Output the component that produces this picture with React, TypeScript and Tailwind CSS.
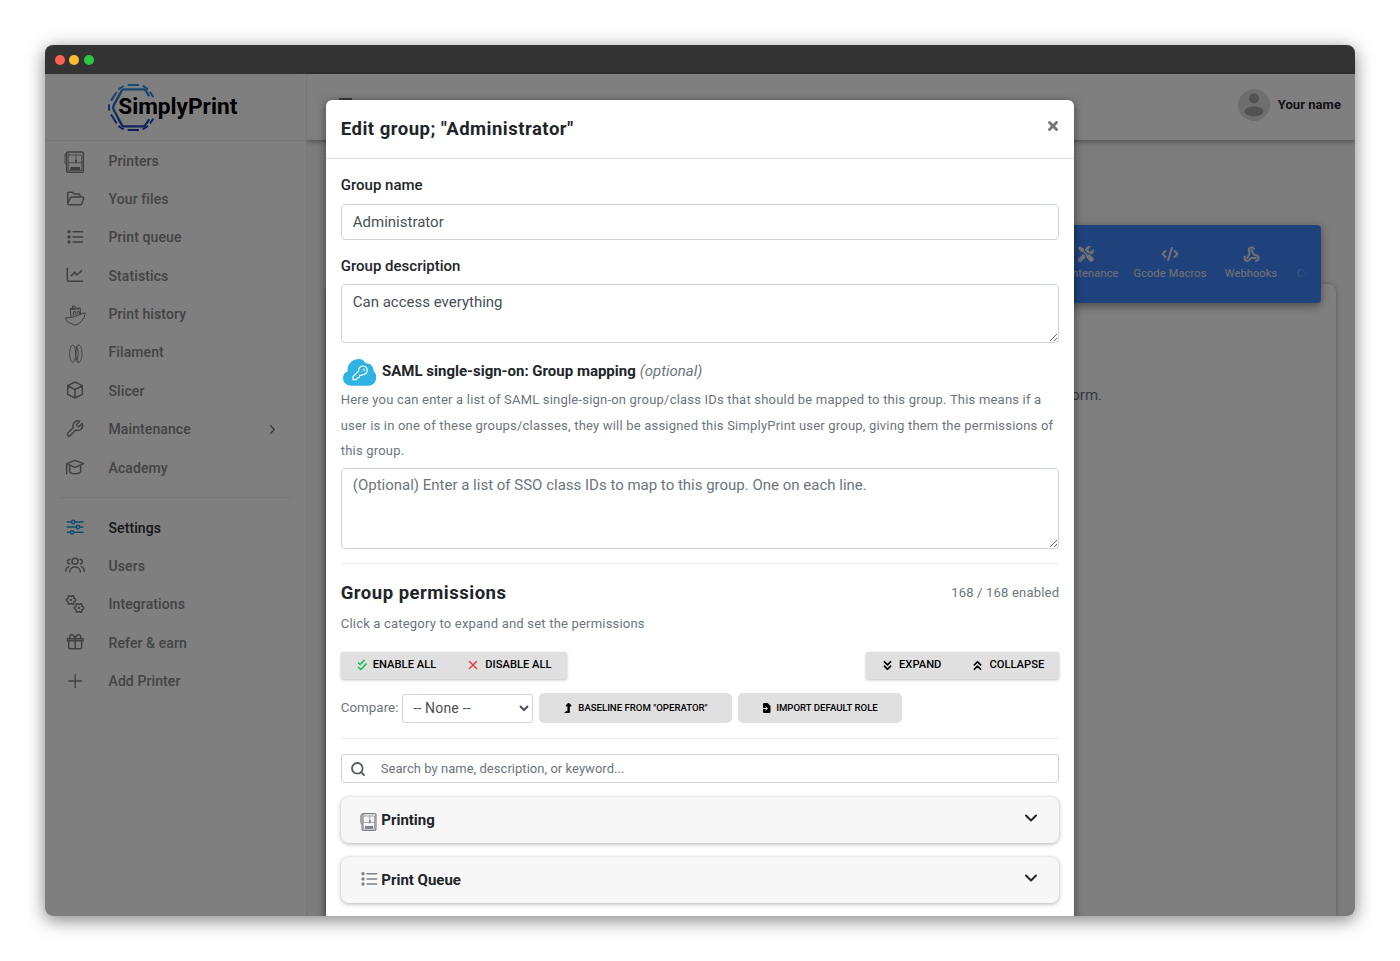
import { ReactNode } from 'react';
import { ChevronDown, ChevronRight, ChevronsDown, ChevronsUp, CodeXml, Search, Webhook, X } from 'lucide-react';
import { FaLevelUpAlt, FaTools } from 'react-icons/fa';

// Scalloped outline used for the two integration cogs
const cogPath = (cx: number, cy: number): string => {
    const points = Array.from({ length: 48 }, (_, i) => {
        const a = (i / 48) * Math.PI * 2;
        const r = 12.5 + 2 * Math.cos(a * 6);
        return `${(cx + r * Math.cos(a)).toFixed(1)},${(cy + r * Math.sin(a)).toFixed(1)}`;
    });
    return `M${points.join('L')}Z`;
};

const PrinterShape = () => (
    <>
        <rect x="11" y="9" width="50" height="61" rx="4" />
        <path d="M11 12Q6 13 6 18V42Q6 46 11 47" strokeWidth="3" />
        <path d="M17 18H56V64H17ZM17 41H34M45 41H56M15 10L19 18M39 18V34" strokeWidth="2.5" />
        <path d="M36 32H42V41L39 46L36 41Z" fill="currentColor" stroke="none" />
        <rect x="22" y="54" width="29" height="10" fill="currentColor" stroke="none" />
    </>
);

const ListShape = () => (
    <>
        <path d="M30 17H59M30 33H59M30 48H59" />
        <g fill="currentColor" stroke="none">
            <circle cx="18" cy="17" r="5" />
            <circle cx="18" cy="33" r="5" />
            <circle cx="18" cy="48" r="5" />
        </g>
    </>
);

const Glyph = ({ children, className = 'size-6' }: { children: ReactNode; className?: string }) => (
    <svg viewBox="0 0 72 72" className={className} fill="none" stroke="currentColor" strokeWidth="4.5" strokeLinecap="round" strokeLinejoin="round">
        {children}
    </svg>
);

const mainLinks = [
    { label: 'Printers', icon: <PrinterShape /> },
    {
        label: 'Your files',
        icon: <path d="M14 46V17Q14 13 18 13H28L34 18H47Q51 18 51 22V27M14 46L22 30Q24 27 27 27H58Q63 27 62 31L57 46Q56 50 52 50H18Q14 50 14 46Z" />,
    },
    { label: 'Print queue', icon: <ListShape /> },
    { label: 'Statistics', icon: <path d="M13 13V47Q13 52 18 52H59M25 35L35 25L42 33L56 20" /> },
    {
        label: 'Print history',
        icon: (
            <>
                <path d="M8 45Q22 45 34 41Q46 38 54 33Q60 30 67 30Q66 46 54 56Q46 64 39 66Q30 66 23 61Q9 57 8 45Z" strokeWidth="3" />
                <path d="M24 42L22 20L52 17L53 33M21 20V17L52 15M29 17L28 9H36V16M31 38V26H38V36M44 34V25H49V32" strokeWidth="3" />
            </>
        ),
    },
    {
        label: 'Filament',
        icon: (
            <g strokeWidth="2.8">
                <ellipse cx="29" cy="38" rx="9" ry="26" />
                <path d="M40 17Q43 12 47 12C53 12 57 24 57 38S53 64 47 64Q43 64 40 59M47 12C42 12 39 24 39 38S42 64 47 64M38 21H43Q50 38 43 55H38" />
            </g>
        ),
    },
    { label: 'Slicer', icon: <path d="M36 9L58 20V46L36 57L14 46V20ZM15 21L36 32L57 21M36 32V56" /> },
    {
        label: 'Maintenance',
        chevron: true,
        icon: (
            <path
                transform="translate(6 3.5) scale(2.4)"
                strokeWidth="1.8"
                d="M14.7 6.3a1 1 0 0 0 0 1.4l1.6 1.6a1 1 0 0 0 1.4 0l3.77-3.77a6 6 0 0 1-7.94 7.94l-6.91 6.91a2.12 2.12 0 0 1-3-3l6.91-6.91a6 6 0 0 1 7.94-7.94l-3.76 3.76z"
            />
        ),
    },
    { label: 'Academy', icon: <path d="M11 53V23L36 13L62 23L36 34L11 23M20 29V46Q22 53 36 53Q51 53 53 46V29" /> },
];

const accountLinks = [
    {
        label: 'Settings',
        active: true,
        icon: (
            <>
                <path d="M13 18H25M36 18H60M13 33H39M51 33H60M13 49H21M33 49H60" />
                <circle cx="30.5" cy="18" r="5" />
                <circle cx="45" cy="33" r="5" />
                <circle cx="27" cy="49" r="5" />
            </>
        ),
    },
    {
        label: 'Users',
        icon: (
            <>
                <circle cx="36" cy="22" r="9" />
                <path d="M20 54C20 34 52 34 52 54M21 16Q14 17 14 23Q14 29 20 30M51 16Q58 17 58 23Q58 29 52 30M8 52Q8 42 17 38M64 52Q64 42 55 38" />
            </>
        ),
    },
    {
        label: 'Integrations',
        icon: (
            <>
                <path d={cogPath(24, 21)} />
                <path d={cogPath(48, 45)} />
                <g fill="currentColor" stroke="none">
                    <circle cx="24" cy="21" r="3.5" />
                    <circle cx="48" cy="45" r="3.5" />
                </g>
            </>
        ),
    },
    { label: 'Refer & earn', icon: <path d="M13 23H60V29H13ZM17 29V49Q17 53 21 53H52Q56 53 56 49V29M36.500 23V53M36 22Q33 11 25 11Q18 12 20 22M37 22Q40 11 48 11Q55 12 53 22" /> },
    { label: 'Add Printer', icon: <path d="M17 33H56M36.500 14V53" strokeWidth="4" /> },
];

type NavItem = { label: string; icon: ReactNode; active?: boolean; chevron?: boolean };

const NavLink = ({ label, icon, active, chevron }: NavItem) => (
    <a className="flex h-[38.36px] items-center pl-[18px] pr-[26px]">
        <span className={active ? 'text-[#1d96dc]' : 'text-[#808080]'}>
            <Glyph>{icon}</Glyph>
        </span>
        <span className={`ml-[21.500px] text-[14px] font-medium tracking-[0.1px] ${active ? 'text-[#2a2d30]' : 'text-[#868686]'}`}>{label}</span>
        {chevron && <ChevronRight className="ml-auto size-[15px] text-[#707070]" strokeWidth={2} />}
    </a>
);

const Logo = () => (
    <div className="flex items-center pl-[61.700px] pt-[7.700px]">
        <svg viewBox="200 125 150 155" className="h-[51.700px] w-[50px] shrink-0" fill="none" stroke="url(#logo)" strokeLinecap="round" strokeLinejoin="round">
            <defs>
                <linearGradient id="logo" gradientUnits="userSpaceOnUse" x1="0" y1="130" x2="0" y2="272">
                    <stop offset="0" stopColor="#2e9be6" />
                    <stop offset="1" stopColor="#2038b0" />
                </linearGradient>
            </defs>
            <path strokeWidth="7" d="M325 165L316 150Q314 147 309 147H250Q246 147 244 151L220 195Q216 201 220 208L244 253Q246 258 250 258H309Q314 258 316 253L325 239" />
            <path strokeWidth="6" strokeLinecap="butt" d="M206 192V211M212 181L229 155M234 147L250 137M262 134H296M307 136L323 147M329 154L339 171M212 222L229 249M234 257L250 267M262 269H296M307 267L323 257M329 249L339 235" />
        </svg>
        <span className="-ml-[38.500px] text-[22.700px] font-bold leading-none text-black">SimplyPrint</span>
    </div>
);

const Sidebar = () => (
    <aside className="z-10 flex w-[262px] shrink-0 flex-col border-r border-[#ececec] bg-white">
        <div className="h-[67px] border-b border-[#ececec]">
            <Logo />
        </div>
        <nav className="pt-[1px]">
            {mainLinks.map((link) => (
                <NavLink key={link.label} {...link} />
            ))}
            <hr className="mx-[15px] mb-[10.700px] mt-[10px] border-[#ececec]" />
            {accountLinks.map((link) => (
                <NavLink key={link.label} {...link} />
            ))}
        </nav>
    </aside>
);

const Page = () => (
    <main className="flex min-w-0 flex-1 flex-col bg-[#f8f8f8]">
        <header className="flex h-[66px] items-center justify-between bg-white pl-[32px] pr-[14px] shadow-[0_1px_5px_rgba(0,0,0,0.45)]">
            <div className="flex flex-col gap-[3px] pb-[6px]">
                <span className="h-[2px] w-[13px] bg-[#777]" />
                <span className="h-[2px] w-[13px] bg-[#777]" />
                <span className="h-[2px] w-[13px] bg-[#777]" />
            </div>
            <div className="flex items-center gap-[8px] pb-[5px]">
                <svg viewBox="0 0 32 32" className="size-8">
                    <circle cx="16" cy="16" r="16" fill="#dcdcdc" />
                    <circle cx="16" cy="9.500" r="5" fill="#a4a4a4" />
                    <ellipse cx="16" cy="22.500" rx="9.500" ry="5" fill="#a4a4a4" />
                </svg>
                <span className="text-[13px] font-bold tracking-[0.05px] text-[#212529]">Your name</span>
            </div>
        </header>
        <div className="flex flex-1 flex-col pl-[19px] pr-[19px] pt-[84.500px]">
            <div className="z-10 mx-[15px] flex h-[78px] justify-end rounded-[4px] bg-[#4084f8] pr-[6px] text-[11px] tracking-[0.15px] text-[#e4e4e4] shadow-[0_3px_10px_rgba(0,0,0,0.4)]">
                <div className="flex w-[84px] flex-col items-center pt-[21px]">
                    <FaTools className="size-4" />
                    <span className="mt-[4px]">Maintenance</span>
                </div>
                <div className="flex w-[84px] flex-col items-center pt-[20px]">
                    <CodeXml className="size-[18px]" strokeWidth={2.6} />
                    <span className="mt-[3px]">Gcode Macros</span>
                </div>
                <div className="flex w-[78px] flex-col items-center pt-[21px]">
                    <Webhook className="size-[17px]" strokeWidth={2.8} />
                    <span className="mt-[3px]">Webhooks</span>
                </div>
                <div className="w-[25px] bg-gradient-to-r from-white/60 to-transparent to-80% bg-clip-text pl-[7px] pt-[41px] text-transparent">Cu</div>
            </div>
            <div className="-mt-[19px] flex-1 rounded-t-[8px] bg-white pr-[234px] pt-[100px] text-right text-[15px] text-[#6c757d] shadow-[0_0_4px_rgba(0,0,0,0.28)]">form.</div>
        </div>
    </main>
);

const ActionButton = ({ icon, children }: { icon: ReactNode; children: ReactNode }) => (
    <button className="flex h-[27px] items-center gap-[5px] px-[15px] pt-px text-[11.200px] font-medium text-black">
        {icon}
        {children}
    </button>
);

const CategoryCard = ({ title, icon }: { title: string; icon: ReactNode }) => (
    <div className="flex h-[46px] items-center rounded-[8px] bg-[#f7f7f7] pl-4 pr-[18px] shadow-[0_1px_4px_rgba(0,0,0,0.32)]">
        <span className="flex w-6 justify-center text-[#7c8086]">{icon}</span>
        <span className="ml-[0.500px] text-[15px] font-bold text-[#212529]">{title}</span>
        <ChevronDown className="ml-auto mt-[-5px] size-5 text-[#212529]" strokeWidth={2.4} />
    </div>
);

const EditGroupModal = () => (
    <div className="mx-auto mt-[26px] w-[748.500px] rounded-t-[6px] bg-white text-[#212529] shadow-[0_2px_10px_rgba(0,0,0,0.5)]">
        <div className="flex h-[59px] items-center justify-between border-b border-[#dee2e6] px-[15px]">
            <h2 className="pt-[2px] text-[18.500px] font-bold tracking-[0.5px]">Edit group; "Administrator"</h2>
            <button className="mr-[-1px] mt-[-6px] text-[#777]">
                <X className="size-[14px]" strokeWidth={5} />
            </button>
        </div>
        <div className="px-[15px] pt-[15px]">
            <label className="block h-[30px] text-[15px] font-medium leading-[23px]">Group name</label>
            <input defaultValue="Administrator" className="block h-9 w-full rounded-[4px] border border-[#ced4da] px-[11px] text-[15px] text-[#495057]" />
            <label className="mt-[14px] block h-[30px] text-[15px] font-medium leading-[24px]">Group description</label>
            <textarea defaultValue="Can access everything" className="block h-[59px] w-full resize-y rounded-[4px] border border-[#ced4da] px-[11px] py-[6px] text-[15px] leading-[23px] text-[#495057]" />

            <div className="mt-4 flex h-[28px] items-center text-[15px]">
                <svg viewBox="38 56 100 82" className="ml-[2px] h-[27.300px] w-[33.300px]" fill="none">
                    <path d="M62 136Q38 134 38 113Q38 99 52 93Q50 70 70 60Q95 49 106 69Q128 68 130 92Q138 98 138 112Q136 134 116 136Z" fill="#2fb2e4" />
                    <path d="M85 92A13 13 0 1 1 97 103L93 105L88 105L87 111L81 113L79 118H68V109Z" stroke="#fff" strokeWidth="3.500" strokeLinejoin="round" />
                    <circle cx="101" cy="88" r="3" fill="#fff" />
                </svg>
                <span className="mb-[3px] ml-[6px] font-bold">SAML single-sign-on: Group mapping</span>
                <em className="mb-[3px] ml-[4px] text-[#6c757d]">(optional)</em>
            </div>
            <p className="h-[81px] text-[13px] leading-[25.600px] tracking-[0.2px] text-[#6c757d]">
                Here you can enter a list of SAML single-sign-on group/class IDs that should be mapped to this group. This means if a<br />
                user is in one of these groups/classes, they will be assigned this SimplyPrint user group, giving them the permissions of<br />
                this group.
            </p>
            <textarea
                placeholder="(Optional) Enter a list of SSO class IDs to map to this group. One on each line."
                className="block h-[81px] w-full resize-y rounded-[4px] border border-[#ced4da] px-[11px] py-[5px] text-[15px] leading-[23px] placeholder:text-[#6c757d]"
            />

            <hr className="mt-[14px] border-[#ebebeb]" />
            <div className="flex h-[58px] items-center justify-between">
                <h3 className="pt-px text-[18.500px] font-bold tracking-[0.5px]">Group permissions</h3>
                <span className="text-[13px] tracking-[0.2px] text-[#6c757d]">168 / 168 enabled</span>
            </div>
            <p className="h-[30px] text-[13px] leading-[3px] tracking-[0.2px] text-[#6c757d]">Click a category to expand and set the permissions</p>

            <div className="-mt-[0.500px] flex justify-between">
                <div className="flex rounded-[2px] bg-[#e0e0e0] shadow-[0_1px_3px_rgba(0,0,0,0.25)]">
                    <ActionButton
                        icon={
                            <svg viewBox="0 0 12 12" className="mb-px size-[12px]" fill="none" stroke="#16b85a" strokeWidth="1.600">
                                <path d="M2 3.500L4.200 5.500L8.500 1M2 8L5 10.500L10.500 4.500" />
                            </svg>
                        }
                    >
                        ENABLE ALL
                    </ActionButton>
                    <ActionButton icon={<X className="mb-px size-[14px]" color="#f03545" strokeWidth={2.4} />}>DISABLE ALL</ActionButton>
                </div>
                <div className="flex rounded-[2px] bg-[#e0e0e0] shadow-[0_1px_3px_rgba(0,0,0,0.25)]">
                    <ActionButton icon={<ChevronsDown className="mx-[-1px] mb-px size-[15px]" strokeWidth={2.7} />}>EXPAND</ActionButton>
                    <ActionButton icon={<ChevronsUp className="mx-[-1px] mb-px size-[15px]" strokeWidth={2.7} />}>COLLAPSE</ActionButton>
                </div>
            </div>

            <div className="mt-[14.500px] flex h-[30px] items-center">
                <span className="w-[57.500px] text-[13.400px] text-[#6c757d]">Compare:</span>
                <select className="ml-1 h-[29px] w-[131px] rounded-[3px] border border-[#ced4da] bg-white pl-[6px] text-[14px] tracking-[0.2px] text-[#495057]">
                    <option>-- None --</option>
                </select>
                <button className="ml-[6px] flex h-[30px] w-[192.500px] items-center justify-center gap-[5px] rounded-[5px] bg-[#e0e0e0] text-[9.600px] font-medium text-black">
                    <FaLevelUpAlt className="size-[10px]" stroke="currentColor" strokeWidth={40} />
                    BASELINE FROM "OPERATOR"
                </button>
                <button className="ml-[6px] flex h-[30px] w-[164.500px] items-center justify-center gap-[5px] rounded-[5px] bg-[#e0e0e0] text-[9.600px] font-medium text-black">
                    <svg viewBox="0 0 9 10" className="h-[10px] w-[9px]">
                        <path d="M1 1Q1 0 2 0H5.500L8.500 3V9Q8.500 10 7.500 10H2Q1 10 1 9Z" />
                        <path d="M0 5.500H5M3.500 3.700L5.500 5.500L3.500 7.300" fill="none" stroke="#e0e0e0" strokeWidth="1" />
                    </svg>
                    IMPORT DEFAULT ROLE
                </button>
            </div>
            <hr className="mb-[15px] mt-[15px] border-[#ebebeb]" />

            <div className="flex h-[29px] items-center rounded-[3px] border border-[#ced4da] pl-[8px]">
                <Search className="size-[16px] text-[#555b61]" strokeWidth={2.7} />
                <input placeholder="Search by name, description, or keyword..." className="ml-[15px] flex-1 text-[13px] tracking-[0.04px] placeholder:text-[#6c757d]" />
            </div>
            <div className="mt-[14px] flex flex-col gap-[14px]">
                <CategoryCard
                    title="Printing"
                    icon={
                        <Glyph className="mt-[2px] size-5">
                            <PrinterShape />
                        </Glyph>
                    }
                />
                <CategoryCard
                    title="Print Queue"
                    icon={
                        <Glyph>
                            <ListShape />
                        </Glyph>
                    }
                />
            </div>
            <div className="h-10" />
        </div>
    </div>
);

const App = () => (
    <div className="h-[961px] w-[1400px] overflow-hidden bg-white p-[45px] font-[Roboto,sans-serif]">
        <div className="flex h-[871px] w-[1310px] flex-col overflow-hidden rounded-[8px] shadow-[0_4px_18px_rgba(0,0,0,0.5)]">
            <div className="flex h-[29px] shrink-0 items-center gap-[4.300px] bg-[#333] pl-[10px] pt-px">
                <span className="size-[10px] rounded-full bg-[#ff5f57]" />
                <span className="size-[10px] rounded-full bg-[#febc2e]" />
                <span className="size-[10px] rounded-full bg-[#28c840]" />
            </div>
            <div className="relative flex min-h-0 flex-1">
                <Sidebar />
                <Page />
                <div className="absolute inset-0 z-20 overflow-hidden bg-black/50">
                    <EditGroupModal />
                </div>
            </div>
        </div>
    </div>
);

export default App;
